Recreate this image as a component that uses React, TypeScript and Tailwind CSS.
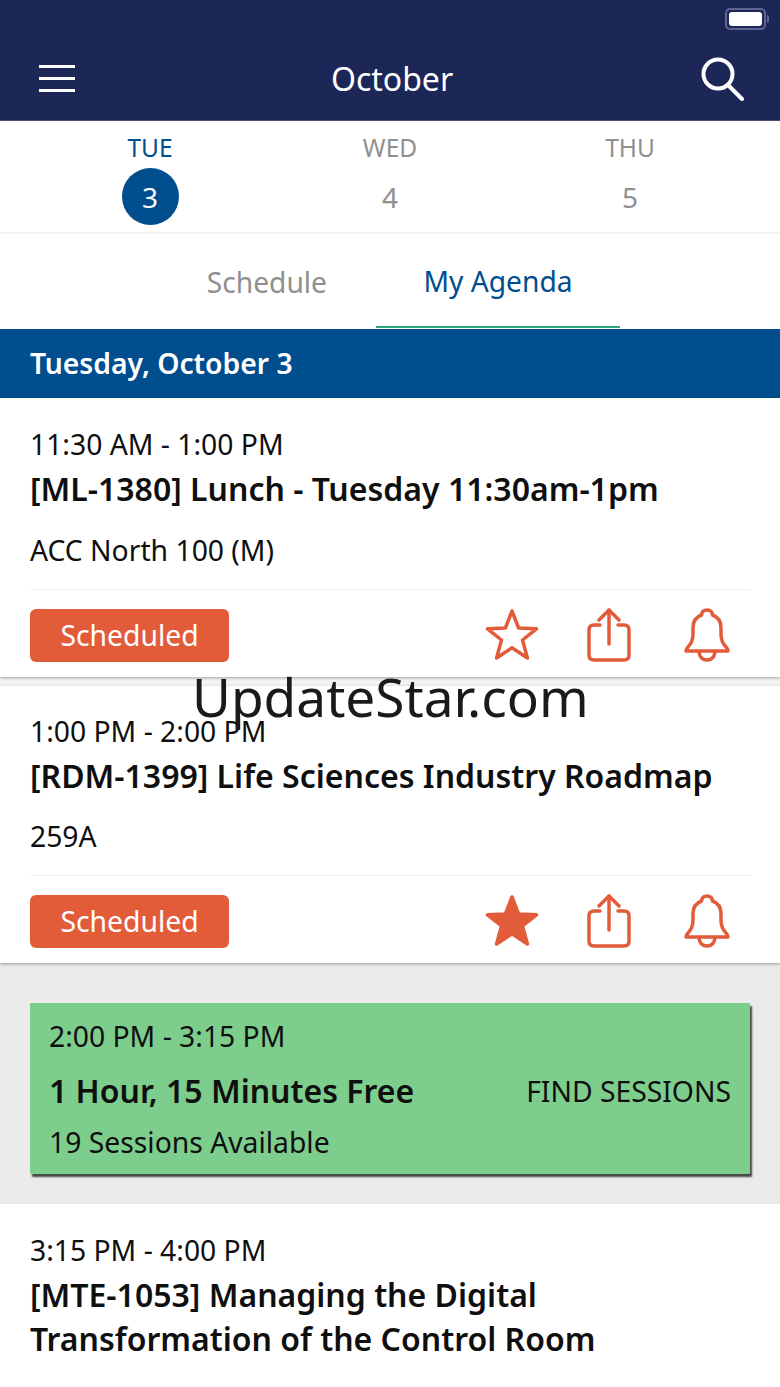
import React from "react";

const OR = "#e25c3a";

function Star({ filled }: { filled?: boolean }) {
  return (
    <svg width="56" height="54" viewBox="0 0 56 54" fill={filled ? OR : "none"} stroke={OR} strokeWidth="3.5" strokeLinejoin="round" strokeLinecap="round">
      <path d="M28 3 L34.6 20 L52.5 20.8 L38.5 32 L43.4 50 L28 39.8 L12.6 50 L17.5 32 L3.5 20.8 L21.4 20 Z" />
    </svg>
  );
}

function Share() {
  return (
    <svg width="44" height="54" viewBox="0 0 44 54" fill="none" stroke={OR} strokeWidth="3.5" strokeLinecap="round" strokeLinejoin="round">
      <path d="M13 17 H7 Q2 17 2 22 V47 Q2 52 7 52 H37 Q42 52 42 47 V22 Q42 17 37 17 H31" />
      <path d="M22 36 V2" />
      <path d="M12 12 L22 2 L32 12" />
    </svg>
  );
}

function Bell() {
  return (
    <svg width="48" height="54" viewBox="0 0 48 54" fill="none" stroke={OR} strokeWidth="3.5" strokeLinecap="round" strokeLinejoin="round">
      <path d="M3 43 Q3 41 5 39 Q10 34 10 26 V20 Q10 10 18.5 7 Q19 2 24 2 Q29 2 29.5 7 Q38 10 38 20 V26 Q38 34 43 39 Q45 41 45 43 Z" />
      <path d="M16 44 Q17 52 24 52 Q31 52 32 44" />
    </svg>
  );
}

function Actions({ filled }: { filled?: boolean }) {
  return (
    <div className="flex items-center justify-between">
      <div className="w-[199px] h-[53px] rounded-[6px] bg-[#e25c3a] text-white text-[28.3px] flex items-center justify-center">Scheduled</div>
      <div className="flex items-center mr-[19px]">
        <Star filled={filled} />
        <div className="ml-[47px]"><Share /></div>
        <div className="ml-[52px]"><Bell /></div>
      </div>
    </div>
  );
}

function Card({ time, title, room, filled, second }: { time: string; title: string; room: string; filled?: boolean; second?: boolean }) {
  return (
    <div className={`bg-white px-[30px] shadow-[0_1px_3px_rgba(0,0,0,0.35)] relative ${second ? "pt-[25px] h-[277px]" : "pt-[26px] h-[279px]"}`}>
      <div className="text-[28.3px] leading-[40px] text-[#0f0f0f]">{time}</div>
      <div className="text-[32px] leading-[44px] font-semibold text-[#0f0f0f] mt-[3px]">{title}</div>
      <div className={`text-[28.3px] leading-[40px] text-[#0f0f0f] ${second ? "mt-[18px]" : "mt-[19px]"}`}>{room}</div>
      <div className="h-px bg-[#eeeeee] mt-[19px] mb-[18px]" />
      <Actions filled={filled} />
    </div>
  );
}

function Day({ name, num, active }: { name: string; num: string; active?: boolean }) {
  return (
    <div className="w-[240px] flex flex-col items-center">
      <div className={`text-[24.5px] leading-[34px] ${active ? "text-[#004e8e]" : "text-[#8f8f8f]"}`}>{name}</div>
      <div className={`w-[57px] h-[57px] rounded-full flex items-center justify-center text-[28px] mt-[3px] ${active ? "bg-[#004e8e] text-white" : "text-[#8f8f8f]"}`}>{num}</div>
    </div>
  );
}

export default function App() {
  return (
    <div className="w-[780px] h-[1387px] overflow-hidden relative bg-white font-['Noto_Sans',sans-serif]">
      <header className="h-[121px] bg-[#1c2657] border-b border-[#4a5179] relative flex items-center pl-[39px] pr-[35px] pt-[37px]">
        <div className="flex-1">
          <div className="flex flex-col gap-[9px] w-[36px]">
            <div className="h-[3px] bg-white" />
            <div className="h-[3px] bg-white" />
            <div className="h-[3px] bg-white" />
          </div>
        </div>
        <div className="text-white text-[32px] leading-[44px]">October</div>
        <div className="flex-1 flex justify-end">
          <svg width="44" height="44" viewBox="0 0 44 44" fill="none" stroke="white" strokeWidth="4" strokeLinecap="round">
            <circle cx="17" cy="17" r="14.5" />
            <path d="M27 28 L41 42" />
          </svg>
        </div>
        <div className="absolute left-[725px] top-[8px] w-[41px] h-[22px] rounded-[5px] border-2 border-[#5d6590] p-[2px]">
          <div className="w-full h-full rounded-[3px] bg-white" />
        </div>
        <div className="absolute left-[767px] top-[15px] w-[2px] h-[8px] rounded-r bg-[#5d6590]" />
      </header>

      <div className="h-[113px] flex justify-center items-start pt-[10px] border-b-2 border-[#f2f2f2]">
        <Day name="TUE" num="3" active />
        <Day name="WED" num="4" />
        <Day name="THU" num="5" />
      </div>

      <div className="h-[95px] flex text-[28.2px]">
        <div className="w-[376px] h-[94px] pt-[2px] flex items-center justify-end pr-[49px] text-[#8f8f8f]">Schedule</div>
        <div className="w-[244px] h-[94px] pt-[2px] flex items-center justify-center text-[#004e8e] border-b-2 border-[#2fa57c]">My Agenda</div>
      </div>

      <div className="h-[69px] bg-[#004e8e] text-white text-[28.3px] font-semibold flex items-center pl-[30px]">Tuesday, October 3</div>

      <div className="bg-[#f4f4f4]">
        <Card time="11:30 AM - 1:00 PM" title="[ML-1380] Lunch - Tuesday 11:30am-1pm" room="ACC North 100 (M)" />
        <div className="h-[9px]" />
        <Card second time="1:00 PM - 2:00 PM" title="[RDM-1399] Life Sciences Industry Roadmap" room="259A" filled />
      </div>

      <div className="h-[241px] bg-[#ebebeb] px-[30px] pt-[40px]">
        <div className="h-[171px] w-[720px] bg-[#7dce8c] shadow-[2px_3px_2px_rgba(0,0,0,0.7)] rounded-[1px] pl-[19px] pr-[19px] pt-[13px] text-[#0f0f0f]">
          <div className="text-[28.3px] leading-[40px]">2:00 PM - 3:15 PM</div>
          <div className="flex items-center justify-between mt-[14px]">
            <div className="text-[32px] leading-[42px] font-semibold">1 Hour, 15 Minutes Free</div>
            <div className="text-[28.3px] leading-[42px]">FIND SESSIONS</div>
          </div>
          <div className="text-[28.3px] leading-[40px] mt-[10px]">19 Sessions Available</div>
        </div>
      </div>

      <div className="bg-white px-[30px] pt-[26px]">
        <div className="text-[28.3px] leading-[40px] text-[#0f0f0f]">3:15 PM - 4:00 PM</div>
        <div className="text-[32px] leading-[44px] font-semibold text-[#0f0f0f] mt-[3px]">[MTE-1053] Managing the Digital<br />Transformation of the Control Room</div>
      </div>

      <div className="absolute left-[192px] top-[660px] text-[53.2px] leading-[74px] text-[#1a1a1a] whitespace-nowrap">UpdateStar.com</div>
    </div>
  );
}
